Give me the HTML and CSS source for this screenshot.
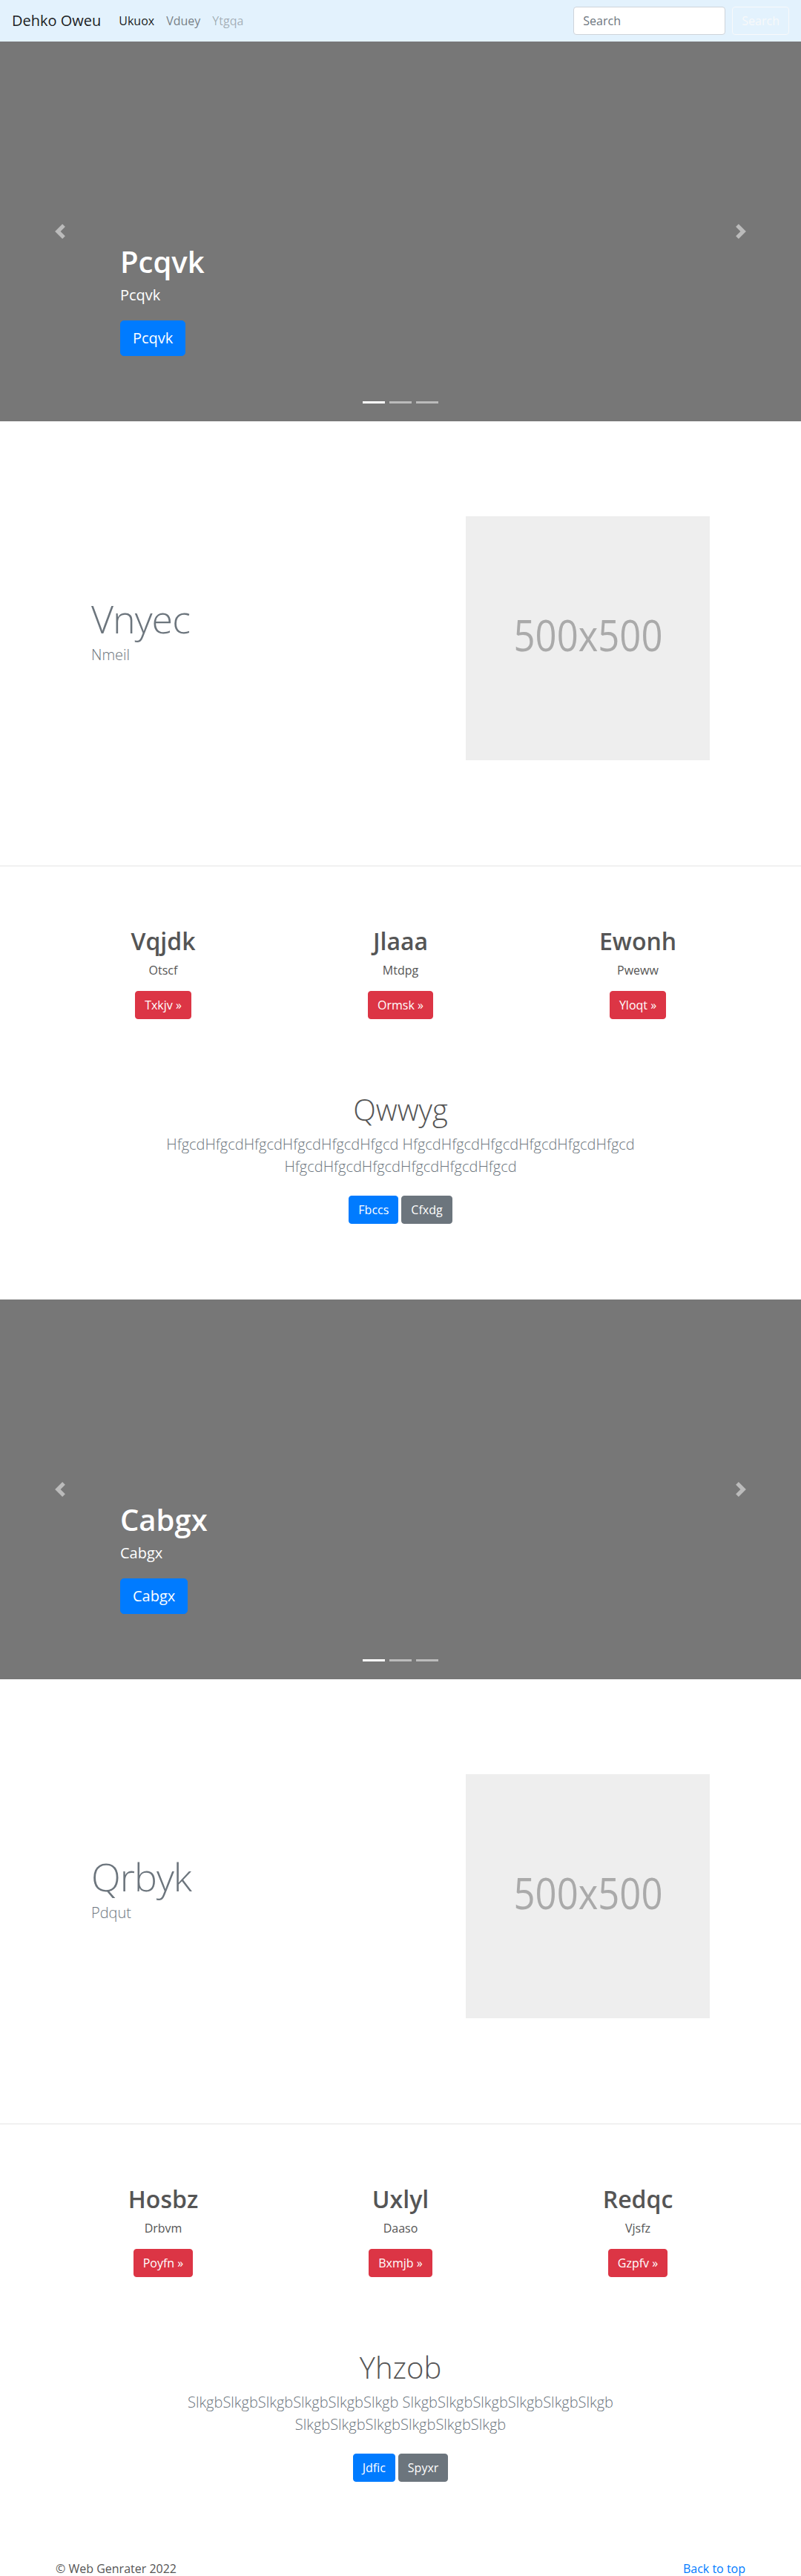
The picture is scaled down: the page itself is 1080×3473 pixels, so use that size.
FILE: index.html
```html
<!DOCTYPE html>
<html lang="en">
<head>
<meta charset="utf-8">
<title>Dehko Oweu</title>
<link rel="stylesheet" href="styles.css">
</head>
<body>
<nav class="navbar">
  <a class="brand" href="#">Dehko Oweu</a>
  <ul class="nav-links">
    <li><a class="nav-link active" href="#">Ukuox</a></li>
    <li><a class="nav-link" href="#">Vduey</a></li>
    <li><a class="nav-link disabled" href="#">Ytgqa</a></li>
  </ul>
  <form class="search">
    <input class="search-input" type="search" placeholder="Search">
    <button class="search-btn" type="button">Search</button>
  </form>
</nav>

<main>
  <section class="carousel">
    <ol class="indicators"><li class="active"></li><li></li><li></li></ol>
    <div class="caption">
      <h1 class="caption-title">Pcqvk</h1>
      <p class="caption-text">Pcqvk</p>
      <p class="caption-actions"><a class="btn btn-lg btn-primary" href="#">Pcqvk</a></p>
    </div>
    <a class="control control-prev" href="#"><svg viewBox="0 0 8 8" width="20" height="20"><path fill="#fff" d="M5.25 0l-4 4 4 4 1.5-1.5L4.25 4l2.5-2.5L5.25 0z"/></svg></a>
    <a class="control control-next" href="#"><svg viewBox="0 0 8 8" width="20" height="20"><path fill="#fff" d="M2.75 0l-1.5 1.5L3.75 4l-2.5 2.5L2.75 8l4-4-4-4z"/></svg></a>
  </section>

  <section class="featurette">
    <div class="feat-row">
      <div class="feat-text">
        <h2 class="feat-heading">Vnyec</h2>
        <p class="lead">Nmeil</p>
      </div>
      <div class="feat-media">
        <svg class="ph" width="329" height="329" viewBox="0 0 329 329"><rect width="329" height="329" fill="#eee"/><text class="ph-text" x="165" y="182" text-anchor="middle" textLength="201" lengthAdjust="spacingAndGlyphs">500x500</text></svg>
      </div>
    </div>
  </section>
  <hr class="divider">

  <section class="marketing">
    <div class="mk-col"><h2 class="mk-title">Vqjdk</h2><p class="mk-text">Otscf</p><p class="mk-actions"><a class="btn btn-danger" href="#">Txkjv &raquo;</a></p></div>
    <div class="mk-col"><h2 class="mk-title">Jlaaa</h2><p class="mk-text">Mtdpg</p><p class="mk-actions"><a class="btn btn-danger" href="#">Ormsk &raquo;</a></p></div>
    <div class="mk-col"><h2 class="mk-title">Ewonh</h2><p class="mk-text">Pweww</p><p class="mk-actions"><a class="btn btn-danger" href="#">Yloqt &raquo;</a></p></div>
  </section>

  <section class="jumbo">
    <div class="jumbo-inner">
      <h1 class="jumbo-title">Qwwyg</h1>
      <p class="lead muted">HfgcdHfgcdHfgcdHfgcdHfgcdHfgcd HfgcdHfgcdHfgcdHfgcdHfgcdHfgcd HfgcdHfgcdHfgcdHfgcdHfgcdHfgcd</p>
      <p class="jumbo-actions"><a class="btn btn-primary" href="#">Fbccs</a><a class="btn btn-secondary" href="#">Cfxdg</a></p>
    </div>
  </section>

  <section class="carousel">
    <ol class="indicators"><li class="active"></li><li></li><li></li></ol>
    <div class="caption">
      <h1 class="caption-title">Cabgx</h1>
      <p class="caption-text">Cabgx</p>
      <p class="caption-actions"><a class="btn btn-lg btn-primary" href="#">Cabgx</a></p>
    </div>
    <a class="control control-prev" href="#"><svg viewBox="0 0 8 8" width="20" height="20"><path fill="#fff" d="M5.25 0l-4 4 4 4 1.5-1.5L4.25 4l2.5-2.5L5.25 0z"/></svg></a>
    <a class="control control-next" href="#"><svg viewBox="0 0 8 8" width="20" height="20"><path fill="#fff" d="M2.75 0l-1.5 1.5L3.75 4l-2.5 2.5L2.75 8l4-4-4-4z"/></svg></a>
  </section>

  <section class="featurette">
    <div class="feat-row">
      <div class="feat-text">
        <h2 class="feat-heading">Qrbyk</h2>
        <p class="lead">Pdqut</p>
      </div>
      <div class="feat-media">
        <svg class="ph" width="329" height="329" viewBox="0 0 329 329"><rect width="329" height="329" fill="#eee"/><text class="ph-text" x="165" y="182" text-anchor="middle" textLength="201" lengthAdjust="spacingAndGlyphs">500x500</text></svg>
      </div>
    </div>
  </section>
  <hr class="divider">

  <section class="marketing">
    <div class="mk-col"><h2 class="mk-title">Hosbz</h2><p class="mk-text">Drbvm</p><p class="mk-actions"><a class="btn btn-danger" href="#">Poyfn &raquo;</a></p></div>
    <div class="mk-col"><h2 class="mk-title">Uxlyl</h2><p class="mk-text">Daaso</p><p class="mk-actions"><a class="btn btn-danger" href="#">Bxmjb &raquo;</a></p></div>
    <div class="mk-col"><h2 class="mk-title">Redqc</h2><p class="mk-text">Vjsfz</p><p class="mk-actions"><a class="btn btn-danger" href="#">Gzpfv &raquo;</a></p></div>
  </section>

  <section class="jumbo">
    <div class="jumbo-inner">
      <h1 class="jumbo-title">Yhzob</h1>
      <p class="lead muted">SlkgbSlkgbSlkgbSlkgbSlkgbSlkgb SlkgbSlkgbSlkgbSlkgbSlkgbSlkgb SlkgbSlkgbSlkgbSlkgbSlkgbSlkgb</p>
      <p class="jumbo-actions"><a class="btn btn-primary" href="#">Jdfic</a><a class="btn btn-secondary" href="#">Spyxr</a></p>
    </div>
  </section>

  <footer class="footer">
    <p class="copy">&copy; Web Genrater 2022</p>
    <p class="top-link"><a href="#">Back to top</a></p>
  </footer>
</main>
</body>
</html>
```

FILE: styles.css
```css
* { box-sizing: border-box; }

html, body {
  margin: 0;
  padding: 0;
}

body {
  font-family: "Open Sans", "Noto Sans", "Liberation Sans", sans-serif;
  font-size: 16px;
  line-height: 1.5;
  color: #555;
  background: #fff;
}

a { text-decoration: none; }

/* ---------- navbar ---------- */
.navbar {
  height: 56px;
  display: flex;
  align-items: center;
  padding: 0 16px;
  background: #e3f2fd;
}
.brand {
  font-size: 20px;
  line-height: 30px;
  color: rgba(0, 0, 0, .9);
  margin-right: 16px;
}
.nav-links {
  display: flex;
  list-style: none;
  margin: 0;
  padding: 0;
}
.nav-link {
  display: block;
  padding: 8px;
  color: rgba(0, 0, 0, .5);
}
.nav-link.active { color: rgba(0, 0, 0, .9); }
.nav-link.disabled { color: rgba(0, 0, 0, .3); }

.search {
  margin-left: auto;
  display: flex;
  align-items: center;
}
.search-input {
  width: 205px;
  height: 38px;
  padding: 6px 12px;
  font: inherit;
  color: #495057;
  background: #fff;
  border: 1px solid #ced4da;
  border-radius: 4px;
  margin-right: 9px;
}
.search-input::placeholder { color: #6c757d; }
.search-btn {
  height: 38px;
  padding: 6px 12px;
  font: inherit;
  color: #f8f9fa;
  background: transparent;
  border: 1px solid #f8f9fa;
  border-radius: 4px;
}

/* ---------- carousel ---------- */
.carousel {
  position: relative;
  height: 512px;
  background: #777;
}
.indicators {
  position: absolute;
  left: 0;
  right: 0;
  bottom: 24px;
  display: flex;
  justify-content: center;
  gap: 6px;
  margin: 0;
  padding: 0;
  list-style: none;
}
.indicators li {
  width: 30px;
  height: 3px;
  background: #fff;
  opacity: .5;
}
.indicators li.active { opacity: 1; }

.caption {
  position: absolute;
  left: 15%;
  right: 15%;
  bottom: 52px;
  padding: 20px 0;
  color: #fff;
  text-align: left;
}
.caption-title {
  margin: 0 0 6px;
  font-size: 40px;
  line-height: 48px;
  font-weight: 600;
}
.caption-text {
  margin: 0 0 19px;
  font-size: 20px;
  line-height: 30px;
}
.caption-actions { margin: 0 0 16px; }

.control {
  position: absolute;
  top: 0;
  bottom: 0;
  width: 15%;
  display: flex;
  align-items: center;
  justify-content: center;
  opacity: .5;
}
.control-prev { left: 0; }
.control-next { right: 0; }
.control svg { display: block; }

/* ---------- buttons ---------- */
.btn {
  display: inline-block;
  padding: 6px 12px;
  font-size: 16px;
  line-height: 24px;
  color: #fff;
  border: 1px solid transparent;
  border-radius: 4px;
}
.btn-lg {
  padding: 8px 16px;
  font-size: 20px;
  line-height: 30px;
  border-radius: 5px;
}
.btn-primary { background: #007bff; border-color: #007bff; }
.btn-secondary { background: #6c757d; border-color: #6c757d; }
.btn-danger { background: #dc3545; border-color: #dc3545; }

/* ---------- featurette ---------- */
.featurette {
  padding: 128px 0 142px;
}
.feat-row {
  width: 960px;
  margin: 0 auto;
  display: flex;
  align-items: center;
}
.feat-text {
  flex: 1;
  padding: 0 63px;
}
.feat-media {
  flex: 1;
  padding: 0 63px;
  display: flex;
  justify-content: flex-end;
}
.feat-heading {
  margin: 0 0 8px;
  font-size: 52px;
  line-height: 52px;
  font-weight: 300;
  letter-spacing: -1px;
  color: #6c757d;
}
.lead {
  margin: 0 0 16px;
  font-size: 20px;
  line-height: 30px;
  font-weight: 300;
  color: #6c757d;
}
.ph { display: block; }
.ph-text {
  font-family: "Open Sans", "Noto Sans", sans-serif;
  font-size: 58px;
  fill: #aaa;
}

.divider {
  margin: 0;
  border: 0;
  border-top: 1px solid rgba(0, 0, 0, .1);
  height: 0;
}

/* ---------- marketing ---------- */
.marketing {
  width: 960px;
  margin: 0 auto;
  padding: 82px 0 34px;
  display: grid;
  grid-template-columns: repeat(3, 1fr);
  text-align: center;
}
.mk-col { padding: 0 15px; }
.mk-title {
  margin: 0 0 8px;
  font-size: 32px;
  line-height: 38px;
  font-weight: 600;
}
.mk-text { margin: 0 0 16px; }
.mk-actions { margin: 0 0 16px; }

/* ---------- jumbo ---------- */
.jumbo {
  padding: 48px 0 94px;
  text-align: center;
}
.jumbo-inner {
  width: 660px;
  margin: 0 auto;
}
.jumbo-title {
  margin: 0 0 8px;
  font-size: 40px;
  line-height: 48px;
  font-weight: 300;
}
.jumbo-actions {
  margin: 0;
  display: flex;
  justify-content: center;
  gap: 4px;
}
.jumbo-actions .btn { margin: 8px 0; }

/* ---------- footer ---------- */
.footer {
  width: 960px;
  margin: 0 auto;
  padding: 3px 15px 0;
  display: flex;
  justify-content: space-between;
}
.footer p { margin: 0; }
.top-link a { color: #007bff; }
```
